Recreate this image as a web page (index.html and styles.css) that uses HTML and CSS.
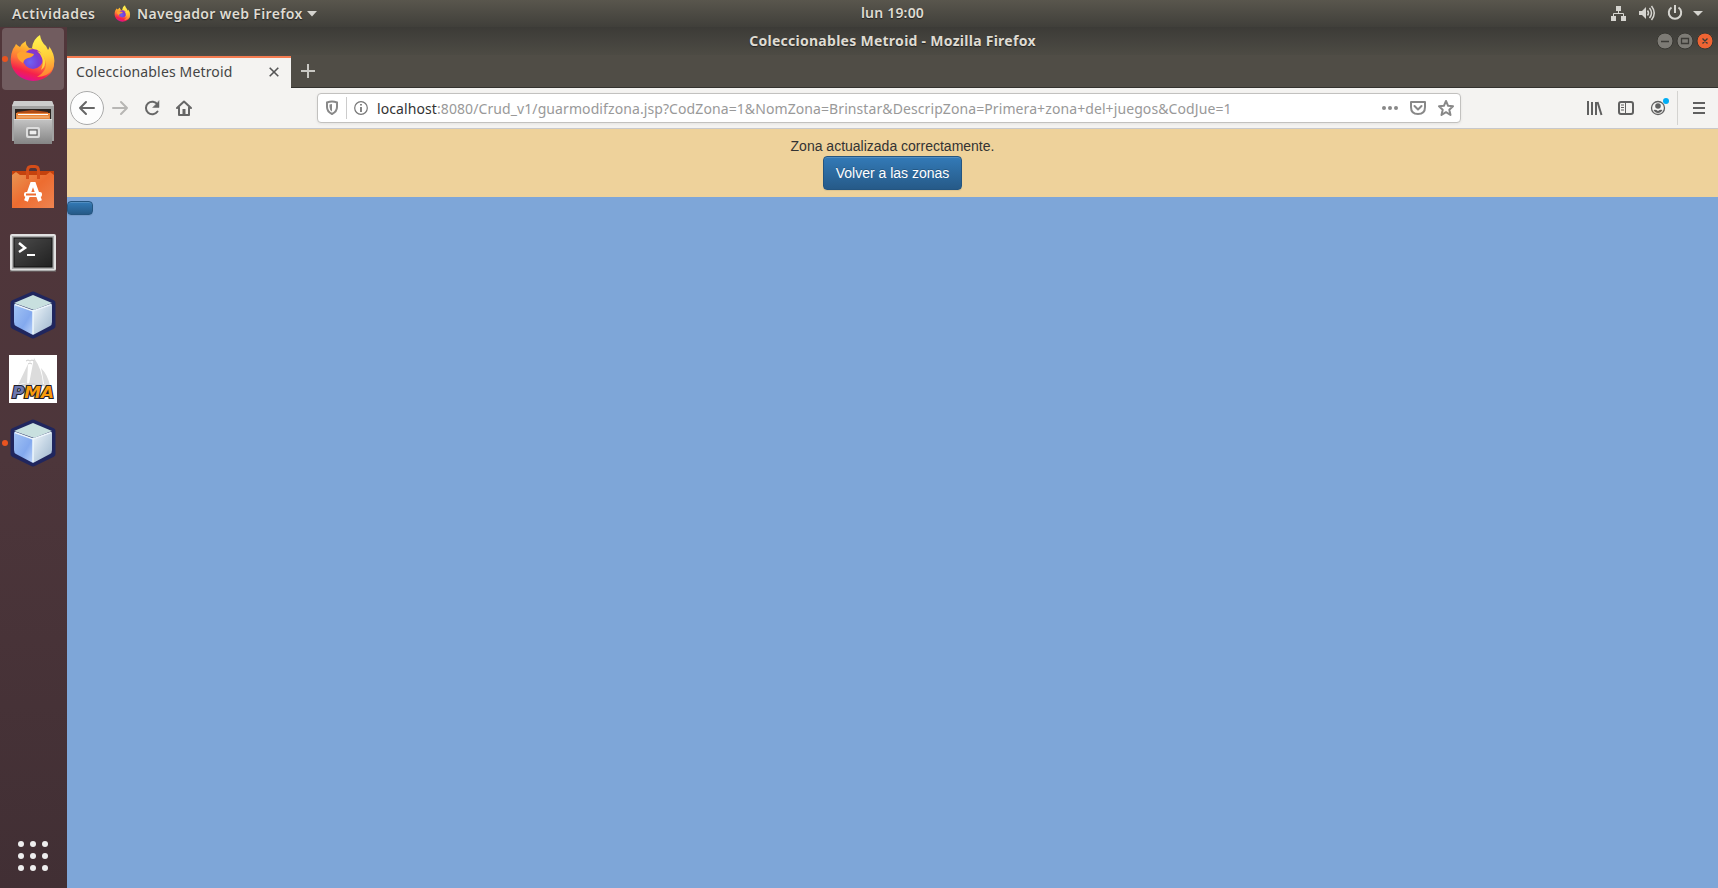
FILE: index.html
```html
<!DOCTYPE html>
<html lang="es">
<head>
<meta charset="utf-8">
<title>Coleccionables Metroid</title>
<link rel="stylesheet" href="styles.css">
</head>
<body>
<svg class="defs" width="0" height="0" aria-hidden="true">
  <defs>
    <linearGradient id="flame" x1=".8" y1="0" x2=".45" y2="1"><stop offset="0" stop-color="#fff44f"/><stop offset=".3" stop-color="#ffb02e"/><stop offset=".58" stop-color="#ff7139"/><stop offset=".82" stop-color="#f5214b"/><stop offset="1" stop-color="#e0118e"/></linearGradient>
    <linearGradient id="tail" x1=".5" y1="0" x2=".6" y2="1"><stop offset="0" stop-color="#fff44f"/><stop offset=".5" stop-color="#ffd03a"/><stop offset="1" stop-color="#ff7d32"/></linearGradient>
    <radialGradient id="globe" cx=".35" cy=".65" r=".7"><stop offset="0" stop-color="#6f62f2"/><stop offset=".6" stop-color="#7440d8"/><stop offset="1" stop-color="#9a2bc0"/></radialGradient>
    <linearGradient id="cubeL" x1="0" y1="0" x2="1" y2="1"><stop offset="0" stop-color="#a3c4f4"/><stop offset=".6" stop-color="#83a9ee"/><stop offset="1" stop-color="#bdd4f9"/></linearGradient>
    <linearGradient id="cubeR" x1="0" y1="0" x2="1" y2="1"><stop offset="0" stop-color="#f0f6fa"/><stop offset=".5" stop-color="#c4d5e4"/><stop offset="1" stop-color="#9eb5cc"/></linearGradient>
    <linearGradient id="metal" x1="0" y1="0" x2="0" y2="1"><stop offset="0" stop-color="#c4c4c4"/><stop offset="1" stop-color="#858585"/></linearGradient>
    <linearGradient id="bag" x1="0" y1="0" x2="1" y2="1"><stop offset="0" stop-color="#e89754"/><stop offset=".5" stop-color="#ed6c30"/><stop offset="1" stop-color="#ee8451"/></linearGradient>
    <linearGradient id="screen" x1="0" y1="0" x2="1" y2="1"><stop offset="0" stop-color="#4c4c4c"/><stop offset="1" stop-color="#202020"/></linearGradient>
    <symbol id="firefox" viewBox="0 0 46 48">
      <path fill="url(#flame)" d="M5 12 6 10Q8 12 10 13 12 9 16 7 15 11 19 14L40 17Q48 31 40 40 33 47 23 47 8 46 2 33-1 24 3 15Z"/>
      <path fill="url(#tail)" d="M22 14Q23 5 30 1 31 8 36 12L38 16Q40 14 39 12 48 25 42 36 37 43 27 43 36 38 36 30 35 22 30 19L26 17Z"/>
      <circle cx="23" cy="25" r="10" fill="url(#globe)"/>
      <path fill="#ffd23c" d="M27 17Q33 18 35 26 36 33 31 36 34 29 32 24 30 19 27 17Z"/>
      <path fill="#ffa22e" d="M7 20Q10 16 15 18L24 20Q23 23 18 24 14 25 13 29 7 26 7 20Z"/>
    </symbol>
    <symbol id="cube" viewBox="0 0 46 48">
      <path d="M23 3.500 42.500 12V35L23 44.500 3.500 35V12Z" fill="#20265e" stroke="#20265e" stroke-width="6" stroke-linejoin="round"/>
      <path d="M23 4 42 12 24 19 4 12Z" fill="#c8e0df"/>
      <path d="M4 13 23 20V44L6 35Q4 34 4 31Z" fill="url(#cubeL)"/>
      <path d="M23 20 42 13V31Q42 34 40 35L23 44Z" fill="url(#cubeR)"/>
      <path d="M23 20V43M5 13.500 23 20 41 13.500" fill="none" stroke="#edf6fc" stroke-width="1.500"/>
    </symbol>
  </defs>
</svg>
<div class="desktop">
  <header class="topbar">
    <div class="topbar-left">
      <span class="activities">Actividades</span>
      <svg class="mini-fox" width="17" height="17"><use href="#firefox"/></svg>
      <span class="app-name">Navegador web Firefox</span>
      <svg width="10" height="6"><path d="M0 0H10L5 5.500Z" fill="#d5d4cf"/></svg>
    </div>
    <span class="clock">lun 19:00</span>
    <div class="tray">
      <svg width="104" height="27" viewBox="1610 0 104 27">
        <g fill="#d5d4cf"><path d="M1616 6h5v5h-5zM1611 16h5v5h-5zM1621 16h5v5h-5z"/><path d="M1639 11h3l4-4v12l-4-4h-3z"/><path d="M1693 11h10l-5 5z"/></g>
        <path d="M1618.500 11v3M1613.500 16v-2.500h10V16" fill="none" stroke="#d5d4cf"/>
        <path d="M1647.500 10.500q2 2.500 0 5M1649.500 8q4 5 0 10M1651.500 6q5.500 7 0 14" fill="none" stroke="#d5d4cf" stroke-width="1.500"/>
        <path d="M1671.500 7.500A6.200 6.200 0 1 0 1678.500 7.500M1675 5v8" fill="none" stroke="#d5d4cf" stroke-width="2"/>
      </svg>
    </div>
  </header>
  <div class="workspace">
    <nav class="dock">
      <div class="dock-item dock-active"><i class="running"></i><svg class="fox" width="46" height="48"><use href="#firefox"/></svg></div>
      <div class="dock-item"><svg class="files" width="42" height="43" viewBox="0 0 42 43">
        <path d="M0 5 2 0H40L42 5V40H0Z" fill="#a2a2a2"/><path d="M2 0H40L42 5H0Z" fill="#ccc"/><path d="M3 8H39V20H3Z" fill="#292421"/><path d="M5 11 20 9 36 11V20H4Z" fill="#b04c18"/><path d="M4 12H38V20H4Z" fill="#e8863b"/><path d="M6 13.500H36" stroke="#fff"/><path d="M5 16H37" stroke="#f6bf87"/><path d="M2 18H40V43H2Z" fill="url(#metal)"/><path d="M2 18.500H40" stroke="#ddd"/><rect x="15" y="27" width="12" height="9" rx="1" fill="#bbb" stroke="#ddd" stroke-width="2"/><rect x="17" y="29" width="8" height="5" fill="#eee" stroke="#555"/></svg></div>
      <div class="dock-item"><svg class="software" width="42" height="44" viewBox="0 0 42 44">
        <path d="M0 7H42V44H0Z" fill="url(#bag)"/><path d="M0 11V7H42V11L38 8 34 11H8L4 8Z" fill="#c5420d"/><path d="M15.500 15V7Q15.500 2.500 19 2.500H23Q26.500 2.500 26.500 7V15" fill="none" stroke="#d44d19" stroke-width="3"/><path d="M14 37 20 20H22L28 37" fill="none" stroke="#fff" stroke-width="4"/><rect x="12" y="28" width="18" height="5" rx="2" fill="#fff"/><path d="M14 30.500H24" stroke="#ed6c30" stroke-width="2"/></svg></div>
      <div class="dock-item"><svg class="terminal" width="46" height="38" viewBox="0 0 46 38">
        <rect x="1" y="1" width="44" height="35" rx="1" fill="#aaa" stroke="#e1e1e1" stroke-width="2"/><path d="M0 37H46" stroke="#777"/><rect x="4" y="4" width="38" height="29" fill="url(#screen)" stroke="#111"/><path d="M9 9 15 14 9 18" fill="none" stroke="#fff" stroke-width="2.500"/><path d="M17 21H25" stroke="#fff" stroke-width="2"/></svg></div>
      <div class="dock-item"><svg class="cube" width="46" height="48"><use href="#cube"/></svg></div>
      <div class="dock-item"><svg class="pma" width="48" height="48" viewBox="0 0 48 48">
        <path d="M0 0H48V48H0Z" fill="#fff"/><path d="M19 9 9 30Q14 27 18 29ZM25 3 20 29Q27 28 34 29 33 14 25 3ZM32 13Q34 22 35 29L41 31Q39 20 32 13Z" fill="#dcdcdc"/><path d="M7 32Q23 26 42 32" fill="none" stroke="#d5d5d5" stroke-width="2"/><path d="M17 6q2-2 4 0 2-2 4 0M19 9q2-2 4 0" fill="none" stroke="#ccc"/>
        <text x="3" y="43" class="pma-text" textLength="42" lengthAdjust="spacingAndGlyphs"><tspan class="pma-p">P</tspan>MA</text></svg></div>
      <div class="dock-item"><i class="running"></i><svg class="cube" width="46" height="48"><use href="#cube"/></svg></div>
      <div class="all-apps"><i></i><i></i><i></i><i></i><i></i><i></i><i></i><i></i><i></i></div>
    </nav>
    <section class="browser">
      <div class="titlebar"><span class="window-title">Coleccionables Metroid - Mozilla Firefox</span>
        <svg class="window-controls" width="56" height="18" viewBox="0 0 56 18"><circle cx="8" cy="9" r="8" fill="#7d7b75" stroke="#383732"/><circle cx="28" cy="9" r="8" fill="#7d7b75" stroke="#383732"/><circle cx="48" cy="9" r="8" fill="#ef6433" stroke="#383732"/><path d="M4 9.500H12M24.500 6.500H31.500V11.500H24.500ZM45.500 6.500 50.500 11.500M50.500 6.500 45.500 11.500" fill="none" stroke="#3c3b37" stroke-width="1.300"/></svg>
      </div>
      <div class="tabs">
        <div class="tab"><span class="tab-title">Coleccionables Metroid</span><svg class="tab-close" width="10" height="10"><path d="M.7.700 9.300 9.300M9.300.700.700 9.300" stroke="#555" stroke-width="1.600"/></svg></div>
        <svg class="new-tab" width="14" height="14"><path d="M7 0V14M0 7H14" stroke="#c9c8c3" stroke-width="2"/></svg>
      </div>
      <div class="toolbar">
        <svg class="nav-icons" width="140" height="40" viewBox="67 88 140 40" fill="none" stroke-linecap="round" stroke-linejoin="round">
          <circle cx="87" cy="108" r="16.500" fill="#fdfdfd" stroke="#aaa"/>
          <path d="M94 108H80M86 102 80 108 86 114" stroke="#666" stroke-width="2"/>
          <path d="M113 108H127M121 102 127 108 121 114" stroke="#b7b6b4" stroke-width="2"/>
          <path d="M157.500 104.500A6.300 6.300 0 1 0 157.500 111.500" stroke="#666" stroke-width="2"/><path d="M159 101V107.500H153Z" fill="#666" stroke="#666" stroke-width=".5"/>
          <path d="M177 108 184 101.500 191 108M179 107.500V115H189V107.500" stroke="#666" stroke-width="2"/><path d="M182.500 109H185.500V115H182.500Z" fill="#666"/>
        </svg>
        <div class="urlbar">
          <svg width="56" height="29" viewBox="318 94 56 29" fill="none"><path d="M327 102.500Q332 100.500 337 102.500V107Q337 111.500 332 114 327 111.500 327 107Z" stroke="#888" stroke-width="2"/><path d="M332 104V111.500Q329.500 110 329.500 107V104.500Z" fill="#888"/><path d="M346.500 97V119" stroke="#ccc"/><circle cx="361" cy="108" r="6.300" stroke="#777" stroke-width="1.200"/><path d="M361 107V112M361 104V105.500" stroke="#777" stroke-width="1.800"/></svg>
          <span class="url"><b>localhost</b>:8080/Crud_v1/guarmodifzona.jsp?CodZona=1&amp;NomZona=Brinstar&amp;DescripZona=Primera+zona+del+juegos&amp;CodJue=1</span>
          <svg class="url-icons" width="82" height="29" viewBox="1378 94 82 29" fill="none" stroke="#888" stroke-width="2" stroke-linejoin="round"><g fill="#888" stroke="none"><circle cx="1384" cy="108" r="2"/><circle cx="1390" cy="108" r="2"/><circle cx="1396" cy="108" r="2"/></g><path d="M1411 102H1425V107Q1425 114 1418 114 1411 114 1411 107Z"/><path d="M1414.500 106 1418 109.500 1421.500 106" stroke-linecap="round"/><path d="M1446 101 1448.100 105.800 1453 106.300 1449.300 109.700 1450.500 115 1446 112.200 1441.500 115 1442.700 109.700 1439 106.300 1443.900 105.800Z"/></svg>
        </div>
        <svg class="tool-icons" width="132" height="40" viewBox="1582 88 132 40" fill="none" stroke="#606060" stroke-width="2">
          <path d="M1588 101V115M1592 102V115M1596 102V115M1597.500 102 1601.500 115"/>
          <rect x="1619" y="102" width="14" height="12" rx="2"/><path d="M1625.500 102V114M1621 105H1624M1621 107.500H1624M1621 110H1624" stroke-width="1"/>
          <circle cx="1658" cy="108" r="6.500" stroke-width="1.300"/><circle cx="1658" cy="106" r="2.800" fill="#606060" stroke="none"/><path d="M1653.500 110Q1655.500 109 1658 111 1660.500 109 1662.500 110 1661 113 1658 113 1655 113 1653.500 110Z" fill="#606060" stroke="none"/><circle cx="1666" cy="101" r="3" fill="#00adf5" stroke="none"/>
          <path d="M1677.500 91V125" stroke="#d4d3d0" stroke-width="1"/><path d="M1693 103H1705M1693 108H1705M1693 113H1705"/>
        </svg>
      </div>
      <main class="page">
        <div class="notice"><span class="message">Zona actualizada correctamente.</span><a class="btn">Volver a las zonas</a></div>
        <a class="btn btn-empty"></a>
      </main>
    </section>
  </div>
</div>
</body>
</html>
```
FILE: styles.css
```css
* { box-sizing: border-box; }
body { margin: 0; overflow: hidden; font-family: "Noto Sans", sans-serif; }
svg { display: block; flex: none; }
.defs { position: absolute; }
.desktop { display: flex; flex-direction: column; width: 1718px; height: 888px; }
.topbar { display: grid; grid-template-columns: 1fr 80px 1fr; height: 27px; background: linear-gradient(#59564d, #403f3a); color: #dfdbd2; font-size: 14px; font-weight: 600; line-height: 27px; white-space: nowrap; text-shadow: 0 1px 1px #222; padding-left: 67px; }
.topbar-left { display: flex; align-items: center; margin-left: -55px; }
.activities { width: 102px; letter-spacing: .45px; }
.app-name { width: 170px; margin-left: 6px; letter-spacing: .35px; }
.clock { text-align: center; line-height: 26px; letter-spacing: .2px; }
.tray { display: flex; justify-content: flex-end; padding-right: 4px; }
.workspace { display: flex; flex: 1; min-height: 0; }
.dock { display: flex; flex-direction: column; gap: 2px; width: 67px; padding: 1px 3px 0 2px; background: linear-gradient(#51363a, #4d363b 50%, #412f34); }
.dock-item { position: relative; display: flex; align-items: center; justify-content: center; width: 62px; height: 62px; border-radius: 4px; }
.dock-active { background: #715c5f; }
.running { position: absolute; left: 0; top: 28px; width: 6px; height: 6px; border-radius: 50%; background: #e95420; }
.fox, .files, .software { margin-bottom: 2px; }
.terminal { margin-top: 4px; }
.cube { margin-right: 1px; }
.pma-text { font: italic bold 15px "DejaVu Sans", sans-serif; fill: #f89c0e; stroke: #20202a; stroke-width: 2px; paint-order: stroke; }
.pma-p { fill: #6c78af; }
.all-apps { display: grid; grid-template-columns: repeat(3, 6px); gap: 6px; margin: auto 0 17px 16px; }
.all-apps i { height: 6px; border-radius: 50%; background: #eee; }
.browser { display: flex; flex-direction: column; flex: 1; min-width: 0; }
.titlebar { display: grid; grid-template-columns: 1fr 300px 1fr; align-items: center; height: 28px; background: linear-gradient(#3c3b37, #4d4b44); color: #dfdbd2; }
.window-title { grid-column: 2; text-align: center; font-size: 14px; font-weight: 700; letter-spacing: .27px; line-height: 28px; white-space: nowrap; text-shadow: 0 1px 1px #222; }
.window-controls { justify-self: end; margin: 0 5px 0 0; }
.tabs { display: flex; height: 33px; border-bottom: 1px solid #33322e; background: #504d46; }
.tab { display: flex; align-items: center; justify-content: space-between; width: 224px; height: 33px; margin-top: 1px; padding: 0 12px 2px 9px; border-top: 2px solid #f57c51; background: #f4f3f1; color: #454545; }
.tab-title { font-size: 14px; letter-spacing: .15px; line-height: 20px; padding-bottom: 2px; white-space: nowrap; }
.tab-close { margin-bottom: 1px; }
.new-tab { margin: 9px 0 0 10px; }
.toolbar { display: flex; align-items: center; height: 41px; border-bottom: 1px solid #c8c8ca; background: #f4f3f1; }
.urlbar { display: flex; align-items: center; width: 1144px; height: 30px; margin-left: 110px; border: 1px solid #c2c1bf; border-radius: 4px; background: #fff; box-shadow: 0 1px 3px #0001; }
.url { margin-left: 3px; color: #999; font-size: 14px; letter-spacing: .09px; white-space: nowrap; }
.url b { color: #333; font-weight: 400; }
.url-icons { margin-left: auto; }
.tool-icons { margin-left: auto; margin-right: 4px; }
.page { flex: 1; background: #7ea6d8; font-family: "Liberation Sans", Arial, sans-serif; font-size: 14px; line-height: 20px; }
.notice { display: flex; flex-direction: column; align-items: center; height: 68px; padding-top: 7px; background: #eed29b; color: #333; }
.btn { padding: 6px 12px; border: 1px solid #245580; border-radius: 4px; background: linear-gradient(#337ab7, #265a88); box-shadow: inset 0 1px #ffffff26, 0 1px 1px #00000013; color: #fff; text-shadow: 0 -1px #0003; }
.btn-empty { display: block; width: 26px; height: 14px; margin-top: 4px; }
```
